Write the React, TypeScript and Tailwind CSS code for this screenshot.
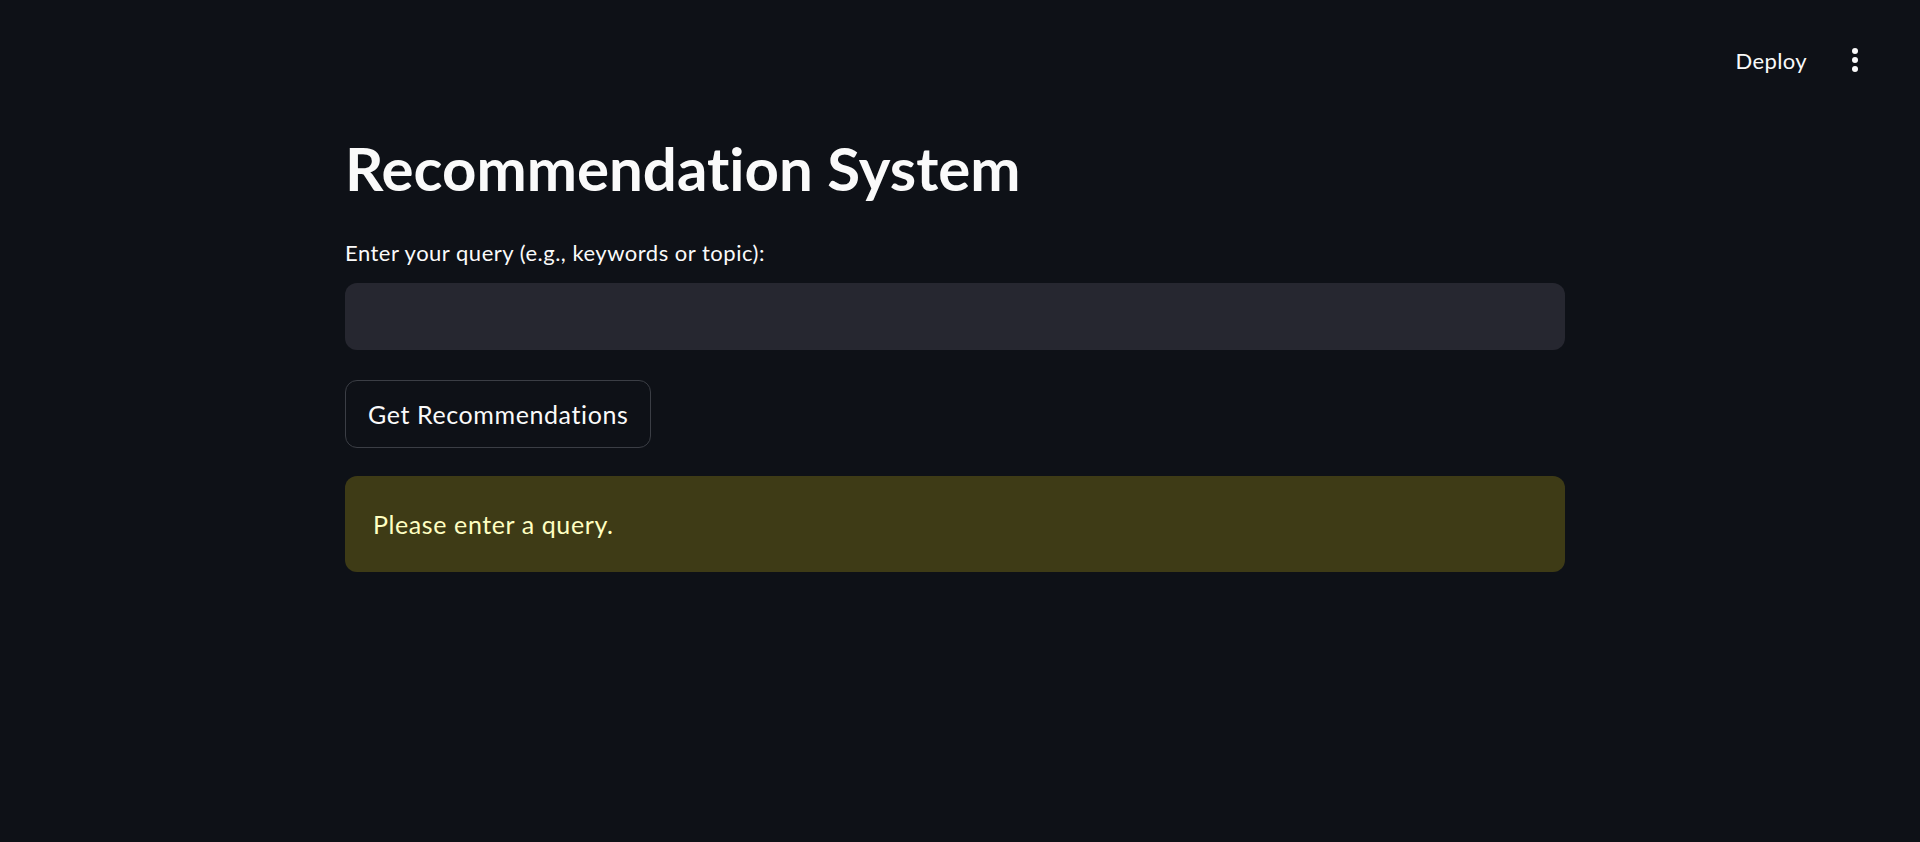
export default function App() {
  return (
    <div
      className="min-h-[842px] w-full bg-[#0e1117] text-[#fafafa] [font-variant-ligatures:none]"
      style={{ fontFamily: "Lato, 'Noto Sans', sans-serif" }}
    >
      <header className="flex h-[120px] items-center justify-end pr-[45px]">
        <button className="px-2 text-[22px] tracking-[0.4px] text-[#fafafa]">Deploy</button>
        <button className="ml-[20px] flex h-10 w-10 flex-col items-center justify-center gap-[3px]">
          <span className="h-[6px] w-[6px] rounded-full bg-[#fafafa]" />
          <span className="h-[6px] w-[6px] rounded-full bg-[#fafafa]" />
          <span className="h-[6px] w-[6px] rounded-full bg-[#fafafa]" />
        </button>
      </header>

      <main className="flex w-[1565px] flex-col pl-[345px] pt-[12px]">
        <h1 className="text-[60px] font-bold leading-[1.2]">
          Recommendation System
        </h1>

        <label className="mt-[36px] text-[22px] leading-[1.2] tracking-[0.5px]">
          Enter your query (e.g., keywords or topic):
        </label>
        <input
          className="mt-[17px] h-[67px] w-full rounded-[12px] bg-[#262730] px-4 text-[22px] outline-none"
          type="text"
        />

        <div className="mt-[30px]">
          <button className="h-[68px] rounded-[12px] border border-[#3b3e45] bg-[#0e1117] px-[22px] text-[25px] tracking-[0.6px] text-[#fafafa]">
            Get Recommendations
          </button>
        </div>

        <div className="mt-[28px] flex h-[96px] items-center rounded-[12px] bg-[#3e3b16] px-[28px] text-[25px] tracking-[0.6px] text-[#ffffc2]">
          Please enter a query.
        </div>
      </main>
    </div>
  )
}
